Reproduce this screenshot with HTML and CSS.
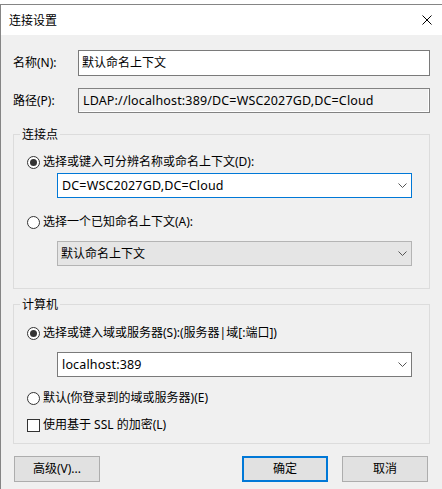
FILE: index.html
```html
<!DOCTYPE html>
<html lang="zh-CN">
<head>
<meta charset="utf-8">
<title>连接设置</title>
<link rel="stylesheet" href="styles.css">
</head>
<body>
<div class="window">
  <div class="titlebar">
    <span class="title">连接设置</span>
    <svg class="close" width="10" height="10" viewBox="0 0 10 10"><path d="M0.5 0.5 L9.5 9.5 M9.5 0.5 L0.5 9.5" stroke="#000" stroke-width="1" fill="none"/></svg>
  </div>
  <div class="content">
    <div class="field-row">
      <span class="field-label">名称(N):</span>
      <div class="textbox">默认命名上下文</div>
    </div>
    <div class="field-row field-row-path">
      <span class="field-label">路径(P):</span>
      <div class="textbox textbox-readonly"><span class="latin">LDAP://localhost:389/DC=WSC2027GD,DC=Cloud</span></div>
    </div>

    <fieldset class="group group-conn">
      <legend class="group-title">连接点</legend>
      <div class="group-body group-body-conn">
        <div class="option"><span class="radio radio-checked"></span><span>选择或键入可分辨名称或命名上下文(D):</span></div>
        <div class="combo combo-focused combo-first">
          <span class="latin">DC=WSC2027GD,DC=Cloud</span>
          <svg class="chevron" width="9" height="5" viewBox="0 0 9 5"><polyline points="0.5,0.5 4.5,4.5 8.5,0.5" fill="none" stroke="#555" stroke-width="1"/></svg>
        </div>
        <div class="option option-gap-lg"><span class="radio"></span><span>选择一个已知命名上下文(A):</span></div>
        <div class="combo combo-disabled">
          <span>默认命名上下文</span>
          <svg class="chevron" width="9" height="5" viewBox="0 0 9 5"><polyline points="0.5,0.5 4.5,4.5 8.5,0.5" fill="none" stroke="#555" stroke-width="1"/></svg>
        </div>
      </div>
    </fieldset>

    <fieldset class="group group-computer">
      <legend class="group-title">计算机</legend>
      <div class="group-body group-body-computer">
        <div class="option"><span class="radio radio-checked"></span><span>选择或键入域或服务器(S):(服务器|域[:端口])</span></div>
        <div class="combo">
          <span class="latin">localhost:389</span>
          <svg class="chevron" width="9" height="5" viewBox="0 0 9 5"><polyline points="0.5,0.5 4.5,4.5 8.5,0.5" fill="none" stroke="#555" stroke-width="1"/></svg>
        </div>
        <div class="option option-gap-md"><span class="radio"></span><span>默认(你登录到的域或服务器)(E)</span></div>
        <div class="option option-gap-sm"><span class="checkbox"></span><span>使用基于 SSL 的加密(L)</span></div>
      </div>
    </fieldset>

    <div class="buttons">
      <div class="button">高级(V)...</div>
      <div class="spacer"></div>
      <div class="button button-default">确定</div>
      <div class="button">取消</div>
    </div>
  </div>
</div>
</body>
</html>
```

FILE: styles.css
```css
html, body {
  margin: 0;
  padding: 0;
  background: #ffffff;
}

body {
  width: 442px;
  height: 489px;
  overflow: hidden;
  font-family: "Noto Sans", "Noto Sans CJK SC", sans-serif;
  font-size: 12px;
  line-height: 16px;
  color: #000;
}

.latin {
  font-size: 12.5px;
  letter-spacing: 0.15px;
}

.window {
  margin-top: 4px;
  height: 485px;
  box-sizing: border-box;
  border-top: 1px solid #858585;
  border-left: 1px solid #858585;
  display: flex;
  flex-direction: column;
}

.titlebar {
  height: 30px;
  flex: none;
  background: #fff;
  display: flex;
  align-items: center;
  padding: 0 10px 0 8px;
}

.title {
  flex: 1;
  font-family: "Noto Sans CJK SC", sans-serif;
}

.close {
  display: block;
}

.content {
  flex: 1;
  background: #f0f0f0;
  padding: 15px 12px 0 12px;
}

.field-row {
  display: flex;
  align-items: center;
}

.field-row-path {
  margin-top: 12px;
}

.field-label {
  width: 65px;
  flex: none;
}

.textbox {
  flex: 1;
  height: 26px;
  box-sizing: border-box;
  border: 1px solid #7a7a7a;
  background: #fff;
  padding: 0 3px;
  display: flex;
  align-items: center;
}

.textbox-readonly {
  height: 25px;
  background: #f0f0f0;
  border-color: #828282;
  box-shadow: inset -1px -1px 0 #fff;
  padding-left: 4px;
}

.group {
  margin: 0;
  padding: 0;
  border: 1px solid #dcdcdc;
  min-width: 0;
}

.group-conn {
  margin-top: 13px;
}

.group-computer {
  margin-top: 7px;
}

.group-title {
  margin-left: 6px;
  padding: 0 2px;
  font-family: "Noto Sans CJK SC", sans-serif;
}

.group-body {
  padding: 12px 17px 22px 13px;
}

.group-body-computer {
  padding-top: 13px;
  padding-bottom: 10px;
}

.option {
  display: flex;
  align-items: center;
  height: 16px;
}

.option-gap-lg {
  margin-top: 16px;
}

.option-gap-md {
  margin-top: 13px;
}

.option-gap-sm {
  margin-top: 11px;
}

.radio {
  width: 13px;
  height: 13px;
  box-sizing: border-box;
  border: 1px solid #333;
  border-radius: 50%;
  background: #fff;
  margin-right: 3px;
  flex: none;
  display: flex;
  align-items: center;
  justify-content: center;
}

.radio-checked::after {
  content: "";
  width: 7px;
  height: 7px;
  border-radius: 50%;
  background: #333;
}

.checkbox {
  width: 13px;
  height: 13px;
  box-sizing: border-box;
  border: 1px solid #333;
  background: #fff;
  margin-right: 3px;
  flex: none;
}

.combo {
  margin-left: 30px;
  margin-top: 11px;
  height: 25px;
  box-sizing: border-box;
  border: 1px solid #7a7a7a;
  background: #fff;
  padding: 0 4px 0 4px;
  display: flex;
  align-items: center;
  justify-content: space-between;
}

.combo-first {
  margin-top: 3px;
}

.combo-focused {
  border-color: #0078d7;
}

.combo-disabled {
  background: #e5e5e5;
  border-color: #b4b4b4;
  padding-left: 3px;
}

.chevron {
  display: block;
}

.buttons {
  display: flex;
  margin-top: 12px;
  padding: 0 2px 0 1px;
  gap: 14px;
}

.spacer {
  flex: 1;
}

.button {
  width: 86px;
  height: 26px;
  box-sizing: border-box;
  border: 1px solid #adadad;
  background: #e1e1e1;
  display: flex;
  align-items: center;
  justify-content: center;
}

.button-default {
  border: 2px solid #0078d7;
}
```
